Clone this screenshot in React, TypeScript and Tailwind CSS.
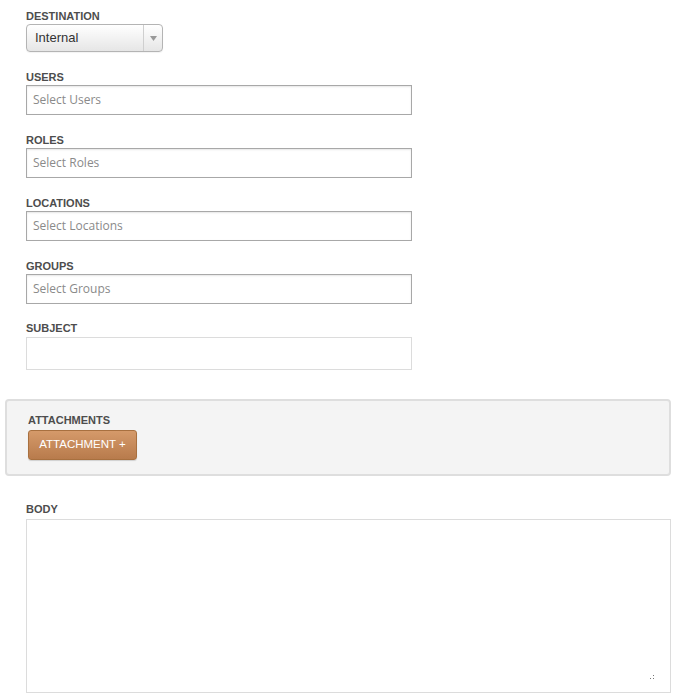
import React from 'react';

const labelCls = "block text-[11px] leading-[14px] font-bold uppercase text-[#4d4d4d] font-['Liberation_Sans',Arial,sans-serif]";

const SelectInput: React.FC<{ placeholder: string }> = ({ placeholder }) => (
    <div className="mt-px w-[386px] h-[30px] border border-[#a8a8a8] bg-white shadow-[inset_0_1px_2px_rgba(0,0,0,0.1)] flex items-center px-[6px]">
        <span className="text-[12px] text-[#8a8a8a] font-['Open_Sans',sans-serif]">{placeholder}</span>
    </div>
);

const Field: React.FC<{ label: string; children: React.ReactNode; className?: string }> = ({ label, children, className }) => (
    <div className={className}>
        <label className={labelCls}>{label}</label>
        {children}
    </div>
);

const App: React.FC = () => {
    return (
        <div className="w-[677px] h-[698px] bg-white pl-[26px] pr-[6px] pt-[9px] overflow-hidden">
            <Field label="Destination" className="mb-[18px]">
                <div className="mt-px w-[137px] h-[28px] rounded-[4px] border border-[#b4b4b4] bg-gradient-to-b from-white to-[#e6e6e6] flex items-stretch shadow-[0_1px_1px_rgba(0,0,0,0.05)]">
                    <span className="flex-1 flex items-center pl-[8px] text-[13px] text-[#333] font-['Liberation_Sans',Arial,sans-serif]">Internal</span>
                    <span className="w-[19px] border-l border-[#cfcfcf] flex items-center justify-center">
                        <svg width="7" height="5" viewBox="0 0 7 5"><path d="M0 0 H7 L3.5 5 Z" fill="#999" /></svg>
                    </span>
                </div>
            </Field>
            <Field label="Users" className="mb-[18px]"><SelectInput placeholder="Select Users" /></Field>
            <Field label="Roles" className="mb-[18px]"><SelectInput placeholder="Select Roles" /></Field>
            <Field label="Locations" className="mb-[18px]"><SelectInput placeholder="Select Locations" /></Field>
            <Field label="Groups" className="mb-[17px]"><SelectInput placeholder="Select Groups" /></Field>
            <Field label="Subject" className="mb-[29px]">
                <div className="mt-[2px] w-[386px] h-[33px] border border-[#dcdcdc] bg-white" />
            </Field>
            <div className="-ml-[21px] h-[77px] border-2 border-[#dedede] rounded-[4px] bg-[#f4f4f4] pl-[21px] pt-[12px]">
                <label className={labelCls}>Attachments</label>
                <button className="mt-[3px] w-[109px] h-[30px] rounded-[3px] border border-[#a8703f] bg-gradient-to-b from-[#d59a6a] to-[#b87b4c] text-white text-[11.5px] uppercase font-['Liberation_Sans',Arial,sans-serif] shadow-[0_1px_1px_rgba(0,0,0,0.15)]">
                    Attachment +
                </button>
            </div>
            <Field label="Body" className="mt-[26px]">
                <div className="relative mt-[3px] w-full h-[174px] border border-[#dcdcdc] bg-white">
                    <svg className="absolute right-[16px] bottom-[12px]" width="4" height="5" viewBox="0 0 4 5">
                        <rect x="3" y="0" width="1" height="1" fill="#777" />
                        <rect x="3" y="3" width="1" height="1" fill="#777" />
                        <rect x="0" y="3" width="1" height="1" fill="#777" />
                    </svg>
                </div>
            </Field>
        </div>
    );
};

export default App;
